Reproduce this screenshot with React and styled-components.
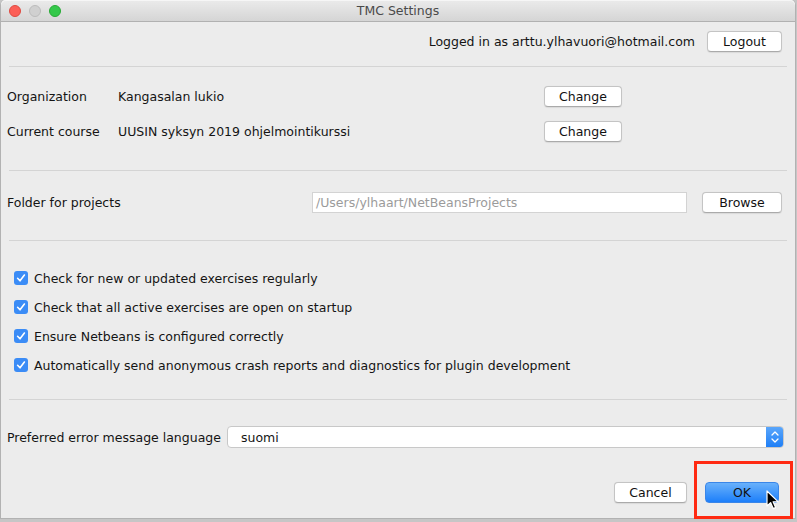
import styled, { createGlobalStyle } from 'styled-components';

const Global = createGlobalStyle`
    html, body {
        margin: 0;
        padding: 0;
        background: #c6c6c6;
        width: 797px;
        height: 522px;
        overflow: hidden;
    }
    * { box-sizing: border-box; }
`

function CheckIcon() {
    return (
        <svg width="14" height="14" viewBox="0 0 14 14">
            <rect x="0" y="0" width="14" height="14" rx="3" fill="#3b8cf6" />
            <path d="M3.6 7.3 L6 9.8 L10.4 4" stroke="white" strokeWidth="1.6" fill="none" strokeLinecap="round" strokeLinejoin="round" />
        </svg>
    )
}

function Cursor() {
    return (
        <svg width="16" height="22" viewBox="0 0 16 22">
            <path d="M1 1 L1 16 L4.6 12.6 L7.2 18.6 L9.6 17.6 L7.1 11.8 L12 11.6 Z" fill="#000" stroke="#fff" strokeWidth="1.2" strokeLinejoin="round" />
        </svg>
    )
}

const options = [
    'Check for new or updated exercises regularly',
    'Check that all active exercises are open on startup',
    'Ensure Netbeans is configured correctly',
    'Automatically send anonymous crash reports and diagnostics for plugin development',
]

export default function App() {
    return (
        <>
            <Global />
            <Window>
                <TitleBar>
                    <Lights>
                        <Light color="#fc5f57" edge="#de4a41" />
                        <Light color="#d0d0d0" edge="#bcbcbc" />
                        <Light color="#34c84a" edge="#27aa35" />
                    </Lights>
                    <Title>TMC Settings</Title>
                </TitleBar>
                <Content>
                    <LoginRow>
                        <Text>Logged in as arttu.ylhavuori@hotmail.com</Text>
                        <Button width={75}>Logout</Button>
                    </LoginRow>
                    <Separator />
                    <CourseSection>
                        <FieldRow>
                            <Label>Organization</Label>
                            <Text>Kangasalan lukio</Text>
                            <Button width={78}>Change</Button>
                        </FieldRow>
                        <FieldRow>
                            <Label>Current course</Label>
                            <Text>UUSIN syksyn 2019 ohjelmointikurssi</Text>
                            <Button width={78}>Change</Button>
                        </FieldRow>
                    </CourseSection>
                    <Separator />
                    <FolderRow>
                        <Label>Folder for projects</Label>
                        <PathField>/Users/ylhaart/NetBeansProjects</PathField>
                        <Button width={80}>Browse</Button>
                    </FolderRow>
                    <Separator />
                    <CheckList>
                        {options.map((o) => (
                            <CheckRow key={o}>
                                <CheckIcon />
                                <Text>{o}</Text>
                            </CheckRow>
                        ))}
                    </CheckList>
                    <Separator />
                    <LanguageRow>
                        <Label>Preferred error message language</Label>
                        <Select>
                            <span>suomi</span>
                            <SelectArrow>
                                <svg width="8" height="14" viewBox="0 0 8 14">
                                    <path d="M1 5 L4 2 L7 5 M1 9 L4 12 L7 9" stroke="white" strokeWidth="1.3" fill="none" strokeLinecap="round" strokeLinejoin="round" />
                                </svg>
                            </SelectArrow>
                        </Select>
                    </LanguageRow>
                    <Footer>
                        <Button width={73}>Cancel</Button>
                        <PrimaryButton>
                            OK
                            <CursorWrap><Cursor /></CursorWrap>
                        </PrimaryButton>
                    </Footer>
                </Content>
                <Highlight />
            </Window>
        </>
    )
}

const Window = styled.div`
    position: relative;
    width: 796px;
    height: 519px;
    background: #ececec;
    border: 1px solid #b2b2b2;
    border-top: none;
    border-radius: 5px 5px 0 0;
    display: flex;
    flex-direction: column;
    font-family: "DejaVu Sans", "Liberation Sans", sans-serif;
    font-size: 12.5px;
    color: #141414;
`
const TitleBar = styled.div`
    height: 22px;
    position: relative;
    display: flex;
    align-items: center;
    justify-content: center;
    background: linear-gradient(#ebebeb, #d5d5d5);
    border-bottom: 1px solid #b1b1b1;
    border-radius: 5px 5px 0 0;
    box-shadow: inset 0 1px 0 #f6f6f6;
`
const Lights = styled.div`
    position: absolute;
    left: 8px;
    top: 5px;
    display: flex;
    gap: 8px;
`
const Light = styled.div`
    width: 12px;
    height: 12px;
    border-radius: 50%;
    background: ${p => p.color};
    border: 1px solid ${p => p.edge};
`
const Title = styled.div`
    font-size: 12.5px;
    color: #4a4a4a;
`
const Content = styled.div`
    flex: 1;
    display: flex;
    flex-direction: column;
`
const Text = styled.span`
    white-space: nowrap;
`
const Label = styled.span`
    white-space: nowrap;
`
const LoginRow = styled.div`
    height: 44px;
    display: flex;
    align-items: center;
    justify-content: flex-end;
    gap: 12px;
    padding-right: 13px;
    padding-bottom: 5px;
`
const Separator = styled.div`
    height: 1px;
    margin: 0 8px;
    background: #d4d4d4;
`
const CourseSection = styled.div`
    height: 103px;
    display: flex;
    flex-direction: column;
    justify-content: center;
    gap: 14px;
    padding-bottom: 10px;
`
const FieldRow = styled.div`
    display: grid;
    grid-template-columns: 111px 426px 78px;
    align-items: center;
    padding-left: 6px;
`
const Button = styled.div`
    width: ${p => p.width}px;
    height: 21px;
    display: flex;
    align-items: center;
    justify-content: center;
    background: #fff;
    border: 1px solid #c4c4c4;
    border-bottom-color: #aaa;
    border-radius: 4px;
    box-shadow: 0 0.5px 1px rgba(0,0,0,0.08);
    font-size: 12.5px;
    color: #111;
`
const FolderRow = styled.div`
    height: 69px;
    display: flex;
    align-items: center;
    padding-left: 6px;
    padding-bottom: 7px;
    ${Label} {
        width: 305px;
    }
    ${Button} {
        margin-left: 15px;
    }
`
const PathField = styled.div`
    width: 375px;
    height: 21px;
    display: flex;
    align-items: center;
    padding-left: 3px;
    background: #fff;
    border: 1px solid #d3d3d3;
    color: #9b9b9b;
`
const CheckList = styled.div`
    height: 158px;
    display: flex;
    flex-direction: column;
    gap: 15px;
    padding-top: 30px;
`
const CheckRow = styled.div`
    display: flex;
    align-items: center;
    gap: 6px;
    padding-left: 13px;
    height: 14px;
`
const LanguageRow = styled.div`
    height: 74px;
    display: flex;
    align-items: center;
    padding-left: 6px;
    ${Label} {
        width: 220px;
    }
`
const Select = styled.div`
    width: 557px;
    height: 22px;
    display: flex;
    align-items: center;
    justify-content: space-between;
    background: #fff;
    border: 1px solid #c8c8c8;
    border-radius: 4px;
    overflow: hidden;
    span {
        padding-left: 13px;
    }
`
const SelectArrow = styled.div`
    width: 17px;
    height: 100%;
    display: flex;
    align-items: center;
    justify-content: center;
    background: linear-gradient(#5aa6fb, #1f7ff6);
`
const Footer = styled.div`
    flex: 1;
    display: flex;
    align-items: center;
    justify-content: flex-end;
    gap: 18px;
    padding-right: 16px;
    padding-bottom: 7px;
`
const PrimaryButton = styled.div`
    position: relative;
    width: 74px;
    height: 21px;
    display: flex;
    align-items: center;
    justify-content: center;
    border-radius: 4px;
    background: linear-gradient(#69b1fb, #1d7ffa);
    border: 1px solid #3a86e8;
    color: #111;
    font-size: 12.5px;
`
const CursorWrap = styled.div`
    position: absolute;
    left: 60px;
    top: 7px;
    line-height: 0;
`
const Highlight = styled.div`
    position: absolute;
    left: 693px;
    top: 461px;
    width: 99px;
    height: 58px;
    border: 3px solid #ff2a12;
    pointer-events: none;
`
